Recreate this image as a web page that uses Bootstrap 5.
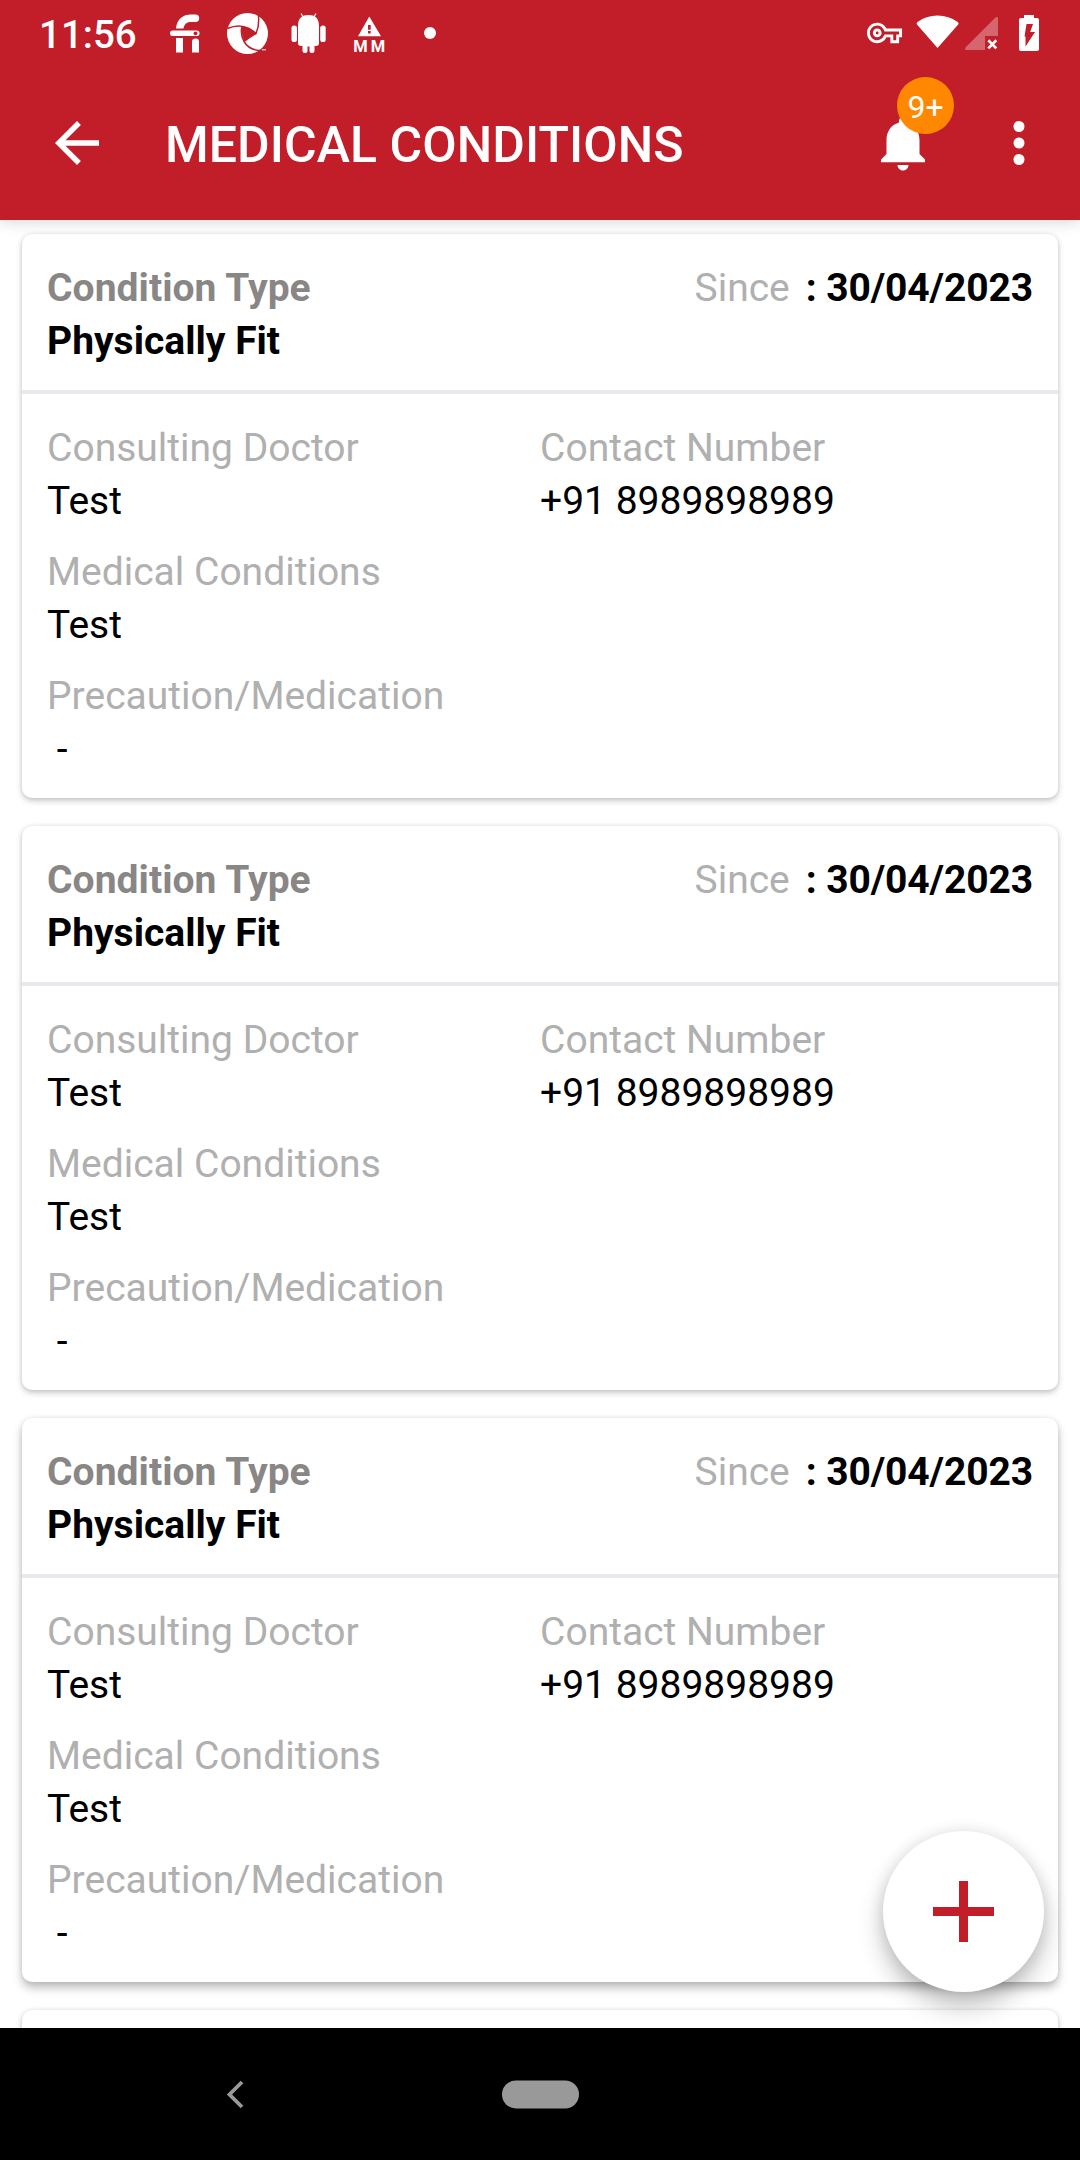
<!DOCTYPE html>
<html lang="en">
<head>
<meta charset="utf-8">
<title>Medical Conditions</title>
<meta name="viewport" content="width=device-width, initial-scale=1">
<link href="https://cdn.jsdelivr.net/npm/bootstrap@5.3.0/dist/css/bootstrap.min.css" rel="stylesheet">
<style>
  body { font-family: Roboto, sans-serif; font-size: 39px; line-height: 53px; color: #000; background: #fff; }
  .screen { width: 1080px; height: 2160px; }
  .topbar { height: 220px; background: #c11e29; color: #fff; z-index: 2; box-shadow: 0 2px 14px rgba(0,0,0,.16); }
  .status { height: 66px; }
  .status svg { flex: none; display: block; }
  .clock { width: 156px; padding-left: 39px; font-size: 38.5px; font-weight: 500; line-height: 69px; }
  .appbar { height: 154px; padding: 0 28px 0 44px; }
  .title-text { font-size: 50px; font-weight: 500; margin-left: 55px; line-height: 66px; padding-top: 3px; letter-spacing: .06px; }
  .alerts { width: 66px; height: 66px; margin-right: 50px; }
  .count { position: absolute; left: 27px; top: -33px; width: 57px; height: 57px; font-size: 32px; line-height: 60px; background: #ff8800; }
  .records { background: #fff; padding: 14px 22px 0; gap: 28px; }
  .record { --bs-card-border-width: 0; --bs-card-border-radius: 10px; --bs-card-bg: #fff; --bs-card-color: #000; height: 564px; flex: none; box-shadow: 0 3px 6px rgba(0,0,0,.2), 0 0 5px rgba(0,0,0,.09); }
  .record-3 { box-shadow: 0 6px 10px rgba(0,0,0,.25), 0 0 5px rgba(0,0,0,.1); }
  .record-head { height: 160px; padding: 28px 25px 0; border-bottom: 4px solid #e8e9ed; }
  .record-body { padding: 28px 25px 0; gap: 18px; }
  .kind { color: #888786; letter-spacing: .05px; }
  .since-date { letter-spacing: -.12px; }
  .label-text { color: #b0b0b0; }
  .half { width: 493px; }
  .fab { right: 36px; bottom: 36px; width: 161px; height: 161px; background: #fff; box-shadow: 0 14px 24px rgba(0,0,0,.25), 0 0 16px rgba(0,0,0,.09); }
  .navkeys { height: 132px; background: #000; }
</style>
<script src="https://cdn.jsdelivr.net/npm/bootstrap@5.3.0/dist/js/bootstrap.bundle.min.js"></script>
</head>
<body>
<div class="screen d-flex flex-column overflow-hidden">
  <header class="topbar position-relative flex-shrink-0">
    <div class="status d-flex">
      <div class="clock">11:56</div>
      <svg width="60" height="66" viewBox="156 0 60 66">
        <path d="M176 28.500C177 19 183 14.600 191 14.600H195.500a3.600 3.600 0 0 1 0 7.400H191C186 22 184.500 24.500 183.500 28.500Z" fill="#fff"/>
        <rect x="170" y="30.500" width="29.500" height="5.600" rx="2.800" fill="#fff"/>
        <circle cx="195.500" cy="33.300" r="1.900" fill="#c11e29"/>
        <path d="M176 38h7v14.500h-7zM192 52.500V41.500a3.500 3 0 0 1 7 0v11z" fill="#fff"/>
      </svg>
      <svg width="65" height="66" viewBox="216 0 65 66">
        <circle cx="247.500" cy="33.500" r="20.500" fill="#fff"/>
        <path d="M242 26.500Q250 27 256.500 33.500Q250 37 244.500 41.200Q240.500 33 242 26.500Z" fill="#c11e29"/>
        <g fill="none" stroke="#c11e29" stroke-width="1.500">
          <path d="M227.500 28.500Q239 23.500 249 28.500L256.500 33.500"/>
          <path d="M258.500 16Q259.500 26 256 33.500Q250 37 244.500 41.200"/>
          <path d="M242 26.500Q240 34 244 41.500Q249 50 260 50.500"/>
        </g>
        <path d="M262 49.800h4" stroke="#fff" stroke-width="1"/>
      </svg>
      <svg width="60" height="66" viewBox="281 0 60 66" fill="#fff">
        <path d="M298 26C298 18 302 15 308.500 15S319 18 319 26V43q0 3-3 3h-1.500v4.500a2.500 2.500 0 0 1-5 0V46.500h-2v4a2.500 2.500 0 0 1-5 0V46H301q-3 0-3-3z"/>
        <rect x="291.500" y="25.500" width="5.500" height="16.500" rx="2.600"/><rect x="320.200" y="25.500" width="5.500" height="16.500" rx="2.600"/>
        <path d="M301 13.500l2.500 4M316 13.500l-2.500 4" stroke="#fff" stroke-width="1.200"/>
      </svg>
      <svg width="59" height="66" viewBox="341 0 59 66" fill="#fff">
        <path d="M369.300 16.500L381 36.200H358z"/><path d="M368 25h2.700v4.800H368zM368 31h2.700v2.500H368z" fill="#c11e29"/>
        <text x="353.300" y="52" font-family="Roboto, sans-serif" font-size="16.500" font-weight="700" textLength="32">MM</text>
      </svg>
      <svg width="60" height="66" viewBox="400 0 60 66"><circle cx="430" cy="33" r="6" fill="#fff"/></svg>
      <svg class="ms-auto" width="50" height="66" viewBox="860 0 50 66" fill="#fff">
        <path transform="translate(867 15.400) scale(1.460)" d="M22 19h-6v-4h-2.680c-1.140 2.420-3.600 4-6.320 4-3.860 0-7-3.140-7-7s3.140-7 7-7c2.720 0 5.170 1.580 6.320 4H24v6h-2v4zm-4-2h2v-4h2v-2H11.940l-.23-.67C11.010 8.340 9.110 7 7 7c-2.760 0-5 2.240-5 5s2.240 5 5 5c2.110 0 4.010-1.340 4.710-3.330l.23-.67H18v4zM7 15c-1.650 0-3-1.350-3-3s1.350-3 3-3 3 1.350 3 3-1.350 3-3 3zm0-4c-.55 0-1 .45-1 1s.45 1 1 1 1-.45 1-1-.45-1-1-1z"/>
      </svg>
      <svg width="52" height="66" viewBox="910 0 52 66" fill="#fff"><path d="M937.500 48L917 24.500Q916 23 917.500 22Q926 15.500 937.500 15.500T957.700 22Q959.200 23 958.200 24.500Z"/></svg>
      <svg width="48" height="66" viewBox="962 0 48 66">
        <path d="M998 17.500V36H985V50H966.500Q964 49.500 965.500 47.500L995.500 17.500Q997 16.500 998 17.500Z" fill="#fff" fill-opacity=".32"/>
        <path d="M988.300 40.200L996.300 48.400M996.300 40.200L988.300 48.400" stroke="#fff" stroke-width="2.700"/>
      </svg>
      <svg width="70" height="66" viewBox="1010 0 70 66">
        <path d="M1024 18v-3h10v3h3q2 0 2 2v29q0 2-2 2h-16q-2 0-2-2V20q0-2 2-2z" fill="#fff"/>
        <path d="M1026.500 24h6.500l-2.800 8h4.800L1025.500 46.500V36.500H1024.500z" fill="#c11e29"/>
      </svg>
    </div>
    <div class="appbar d-flex align-items-center">
      <svg width="66" height="66" viewBox="0 0 24 24" fill="#fff"><path d="M20 11H7.830l5.590-5.590L12 4l-8 8 8 8 1.410-1.410L7.830 13H20z"/></svg>
      <div class="title-text me-auto">MEDICAL CONDITIONS</div>
      <div class="alerts position-relative">
        <svg class="d-block" width="66" height="66" viewBox="0 0 24 24" fill="#fff"><path d="M12 22c1.100 0 2-.9 2-2h-4c0 1.100.89 2 2 2zm6-6v-5c0-3.070-1.640-5.640-4.500-6.320V4c0-.83-.67-1.500-1.500-1.500s-1.500.67-1.500 1.500v.68C7.630 5.360 6 7.920 6 11v5l-2 2v1h16v-1l-2-2z"/></svg>
        <span class="count rounded-circle text-center">9+</span>
      </div>
      <svg width="66" height="66" viewBox="0 0 24 24" fill="#fff"><circle cx="12" cy="6" r="2"/><circle cx="12" cy="12" r="2"/><circle cx="12" cy="18" r="2"/></svg>
    </div>
  </header>

  <main class="position-relative flex-grow-1 overflow-hidden">
    <div class="records d-flex flex-column">
      <article class="card record">
        <div class="record-head d-flex justify-content-between">
          <div><div class="kind fw-bold">Condition Type</div><div class="fw-bold">Physically Fit</div></div>
          <div><span class="label-text">Since</span><b class="since-date ms-3">: 30/04/2023</b></div>
        </div>
        <div class="record-body d-flex flex-column">
          <div class="d-flex">
            <div class="half"><div class="label-text">Consulting Doctor</div><div>Test</div></div>
            <div><div class="label-text">Contact Number</div><div>+91 8989898989</div></div>
          </div>
          <div><div class="label-text">Medical Conditions</div><div>Test</div></div>
          <div><div class="label-text">Precaution/Medication</div><div>&nbsp;-</div></div>
        </div>
      </article>
      <article class="card record">
        <div class="record-head d-flex justify-content-between">
          <div><div class="kind fw-bold">Condition Type</div><div class="fw-bold">Physically Fit</div></div>
          <div><span class="label-text">Since</span><b class="since-date ms-3">: 30/04/2023</b></div>
        </div>
        <div class="record-body d-flex flex-column">
          <div class="d-flex">
            <div class="half"><div class="label-text">Consulting Doctor</div><div>Test</div></div>
            <div><div class="label-text">Contact Number</div><div>+91 8989898989</div></div>
          </div>
          <div><div class="label-text">Medical Conditions</div><div>Test</div></div>
          <div><div class="label-text">Precaution/Medication</div><div>&nbsp;-</div></div>
        </div>
      </article>
      <article class="card record record-3">
        <div class="record-head d-flex justify-content-between">
          <div><div class="kind fw-bold">Condition Type</div><div class="fw-bold">Physically Fit</div></div>
          <div><span class="label-text">Since</span><b class="since-date ms-3">: 30/04/2023</b></div>
        </div>
        <div class="record-body d-flex flex-column">
          <div class="d-flex">
            <div class="half"><div class="label-text">Consulting Doctor</div><div>Test</div></div>
            <div><div class="label-text">Contact Number</div><div>+91 8989898989</div></div>
          </div>
          <div><div class="label-text">Medical Conditions</div><div>Test</div></div>
          <div><div class="label-text">Precaution/Medication</div><div>&nbsp;-</div></div>
        </div>
      </article>
      <article class="card record"></article>
    </div>
    <button class="fab btn border-0 p-0 rounded-circle position-absolute d-flex align-items-center justify-content-center" aria-label="Add">
      <svg width="61" height="61" viewBox="0 0 61 61" fill="#c11e29"><path d="M26 0h9v26h26v9H35v26h-9V35H0v-9h26z"/></svg>
    </button>
  </main>

  <footer class="navkeys flex-shrink-0 d-flex">
    <svg width="1080" height="132" viewBox="0 2028 1080 132">
      <path d="M242 2082l-12.500 12.500L242 2107" fill="none" stroke="#999" stroke-width="3.800"/>
      <rect x="502" y="2080.500" width="77" height="28" rx="14" fill="#999"/>
    </svg>
  </footer>
</div>
</body>
</html>
